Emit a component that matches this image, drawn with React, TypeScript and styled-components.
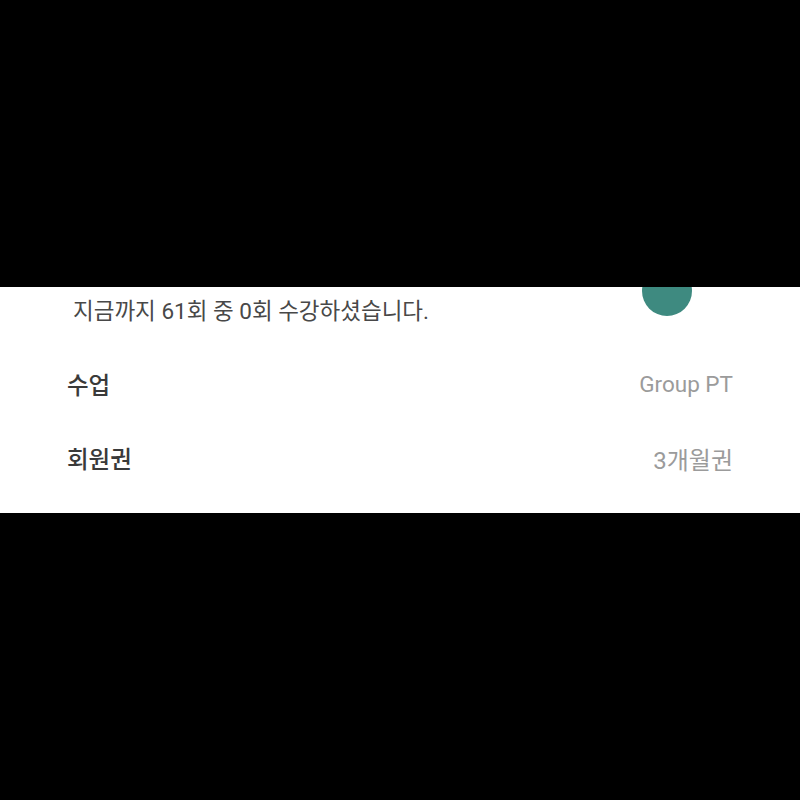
import styled, { createGlobalStyle } from 'styled-components';

const GlobalStyle = createGlobalStyle`
  html, body {
    margin: 0;
    padding: 0;
    background-color: #000;
  }
  * {
    box-sizing: border-box;
  }
`;

const Screen = styled.div`
  width: 800px;
  height: 800px;
  display: flex;
  flex-direction: column;
  background-color: #000;
  font-family: Roboto, 'Noto Sans CJK KR', sans-serif;
`;

const TopSpace = styled.div`
  height: 287px;
  flex-shrink: 0;
`;

const Panel = styled.section`
  position: relative;
  overflow: hidden;
  height: 226px;
  padding: 9px 67px 16px 67px;
  background-color: #fff;
  display: flex;
  flex-direction: column;
`;

const Avatar = styled.div`
  position: absolute;
  top: -21px;
  left: 642px;
  width: 50px;
  height: 50px;
  border-radius: 50%;
  background-color: #3e8a80;
`;

const Summary = styled.p`
  margin: 0 0 21px 6px;
  font-size: 22.5px;
  line-height: 30px;
  color: #484848;
`;

const Row = styled.div`
  height: 74px;
  display: flex;
  align-items: center;
  justify-content: space-between;
`;

const Label = styled.span`
  font-size: 23.5px;
  font-weight: 500;
  color: #3a3a3a;
`;

const Value = styled.span<{ $size: number }>`
  font-size: ${(p) => p.$size}px;
  color: #9b9b9b;
`;

const rows = [
  { label: '수업', value: 'Group PT', size: 22.5 },
  { label: '회원권', value: '3개월권', size: 24 },
];

export default function App() {
  return (
    <>
      <GlobalStyle />
      <Screen>
        <TopSpace />
        <Panel>
          <Avatar />
          <Summary>지금까지 61회 중 0회 수강하셨습니다.</Summary>
          {rows.map((row) => (
            <Row key={row.label}>
              <Label>{row.label}</Label>
              <Value $size={row.size}>{row.value}</Value>
            </Row>
          ))}
        </Panel>
      </Screen>
    </>
  );
}
